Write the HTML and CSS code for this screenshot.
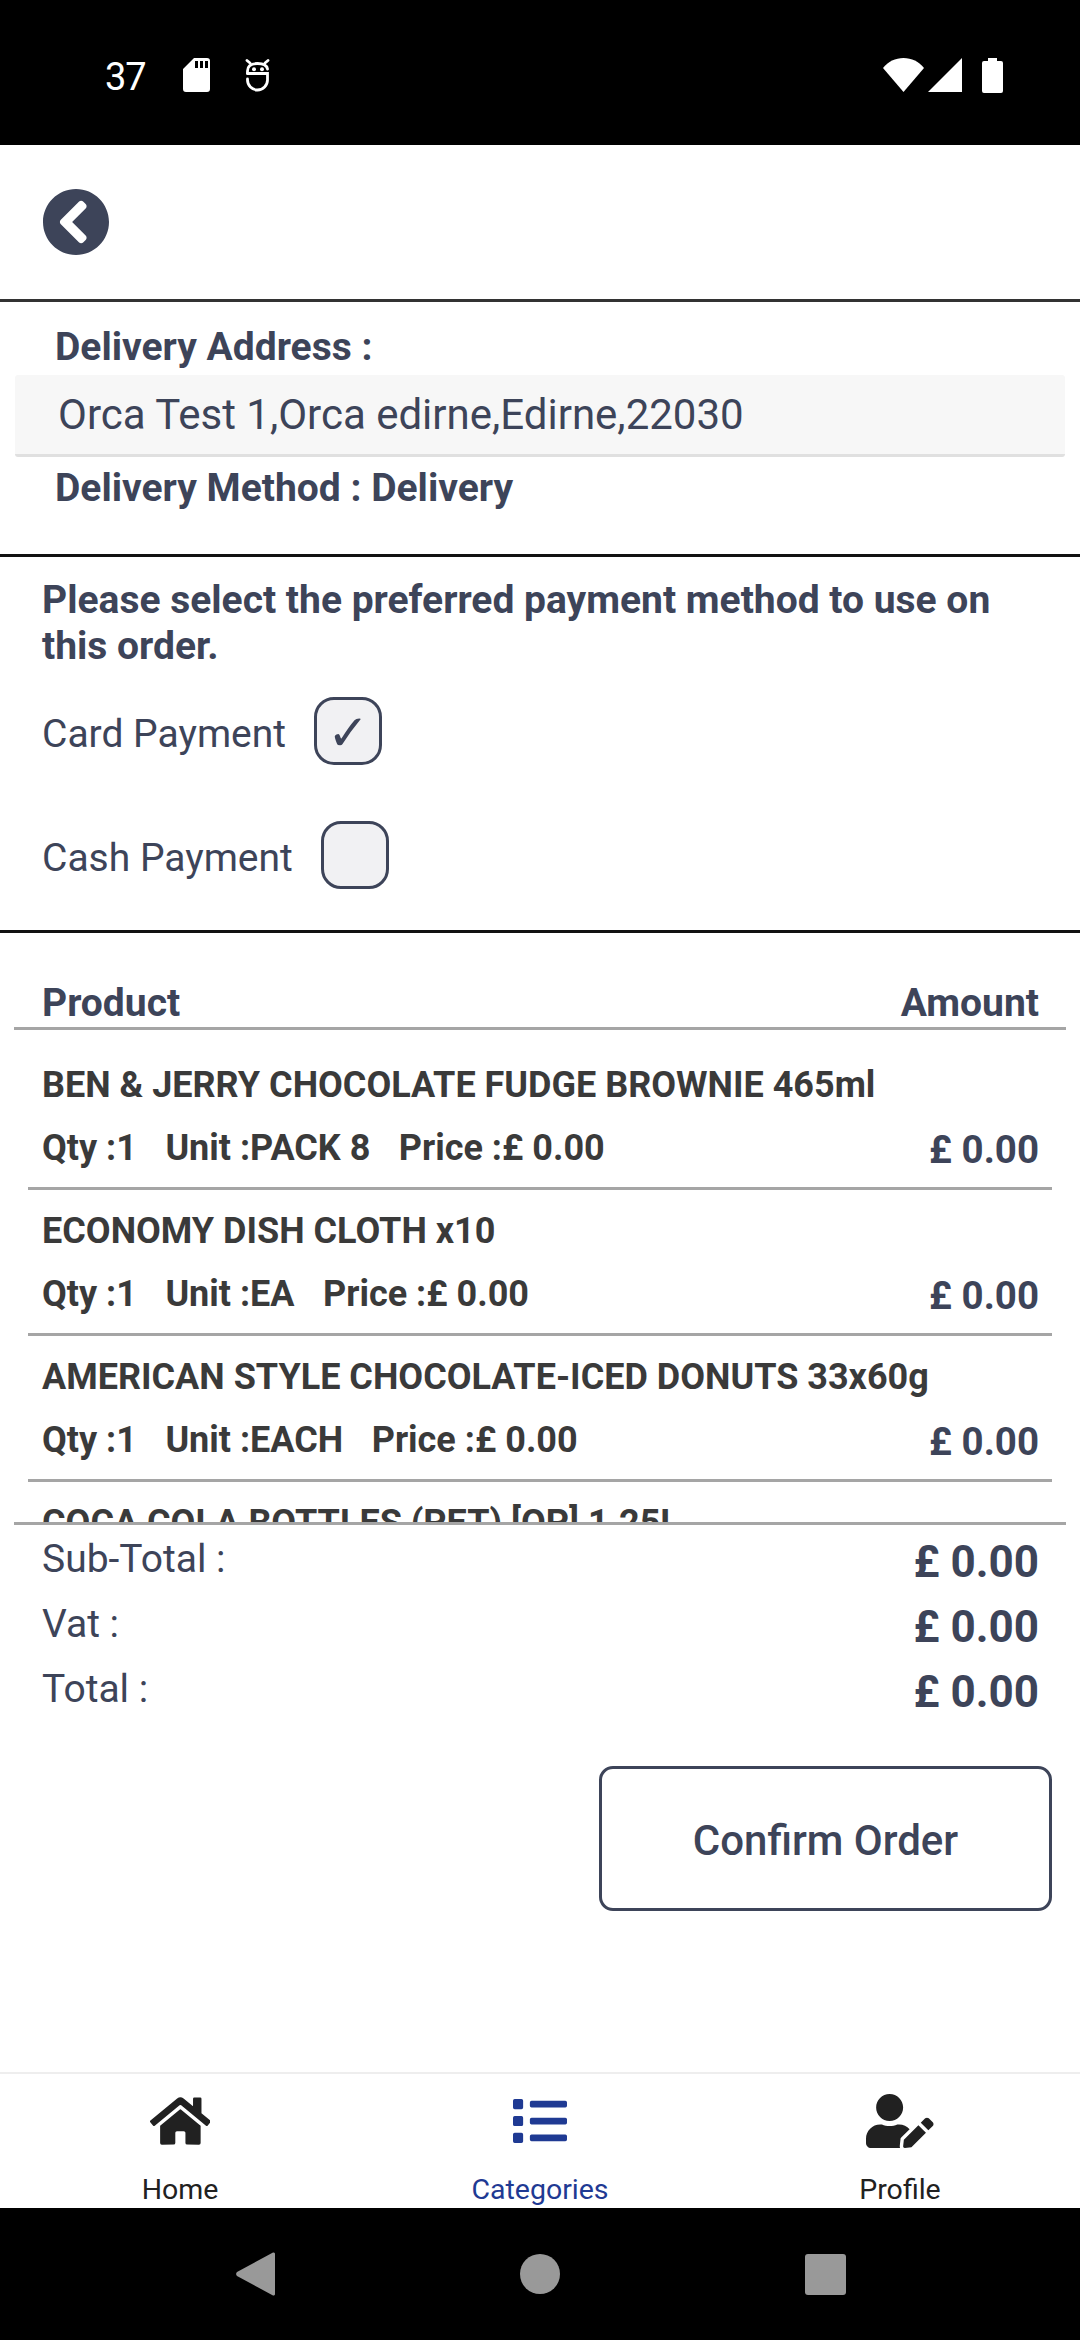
FILE: index.html
```html
<!DOCTYPE html>
<html lang="en">
<head>
<meta charset="utf-8">
<title>Confirm Order</title>
<link rel="stylesheet" href="styles.css">
</head>
<body>
<div class="app">
  <div class="status">
    <div class="status-left">
      <span class="clock">37</span>
      <svg class="ic-sd" viewBox="0 0 27 34"><path fill="#fff" fill-rule="evenodd" d="M11 0h13a3 3 0 0 1 3 3v28a3 3 0 0 1-3 3H3a3 3 0 0 1-3-3V11zM12 3v7h3V3zm5 0v7h3V3zm5 0v7h3V3z"/></svg>
      <svg class="ic-bot" viewBox="0 0 25 34"><g fill="none" stroke="#fff" stroke-width="2.800" stroke-linecap="round"><path d="M2 2.500l3 2.500M23 2.500l-3 2.500"/><path d="M2.500 15.500V13C2.500 8 6.500 5.500 12.500 5.500S22 8 22.500 11"/><path d="M2.500 15.500H22.500V22A10 10 0 0 1 2.500 22V21"/></g><circle cx="9" cy="11.300" r="2" fill="#fff"/><circle cx="17" cy="11.300" r="2" fill="#fff"/></svg>
    </div>
    <div class="status-right">
      <svg class="ic-wifi" viewBox="0 0 41 34"><path fill="#fff" d="M0 10C5 3.500 12.500 0 20.500 0S36 3.500 41 10L20.500 34z"/></svg>
      <svg class="ic-signal" viewBox="0 0 34 34"><path fill="#fff" d="M34 0v34H0z"/></svg>
      <svg class="ic-batt" viewBox="0 0 21 35"><path fill="#fff" d="M6 0h9v3h4a2 2 0 0 1 2 2v28a2 2 0 0 1-2 2H2a2 2 0 0 1-2-2V5a2 2 0 0 1 2-2h4z"/></svg>
    </div>
  </div>

  <header class="topbar">
    <svg class="back" viewBox="8 8 496 496"><path fill="#3d4459" d="M256 8c137 0 248 111 248 248S393 504 256 504 8 393 8 256 119 8 256 8zM142.100 273l135.500 135.500c9.400 9.400 24.600 9.400 33.900 0l17-17c9.400-9.400 9.400-24.600 0-33.900L226.900 256l101.600-101.600c9.400-9.400 9.400-24.600 0-33.900l-17-17c-9.400-9.400-24.600-9.400-33.900 0L142.100 239c-9.400 9.400-9.400 24.600 0 34z"/></svg>
  </header>

  <section class="delivery">
    <div class="d-label">Delivery Address :</div>
    <div class="d-box">Orca Test 1,Orca edirne,Edirne,22030</div>
    <div class="d-label">Delivery Method : Delivery</div>
  </section>

  <section class="payment">
    <h2 class="pay-title">Please select the preferred payment method to use on this order.</h2>
    <div class="pay-row">
      <span class="pay-label">Card Payment</span>
      <span class="check">✓</span>
    </div>
    <div class="pay-row pay-row-2">
      <span class="pay-label">Cash Payment</span>
      <span class="check"></span>
    </div>
  </section>

  <section class="order">
    <div class="order-head"><span>Product</span><span>Amount</span></div>
    <div class="items">
      <div class="item">
        <div class="item-name">BEN &amp; JERRY CHOCOLATE FUDGE BROWNIE 465ml</div>
        <div class="item-line">
          <div class="item-meta"><span>Qty :1</span><span>Unit :PACK 8</span><span>Price :£ 0.00</span></div>
          <span class="item-amt">£ 0.00</span>
        </div>
      </div>
      <div class="item">
        <div class="item-name">ECONOMY DISH CLOTH x10</div>
        <div class="item-line">
          <div class="item-meta"><span>Qty :1</span><span>Unit :EA</span><span>Price :£ 0.00</span></div>
          <span class="item-amt">£ 0.00</span>
        </div>
      </div>
      <div class="item">
        <div class="item-name">AMERICAN STYLE CHOCOLATE-ICED DONUTS 33x60g</div>
        <div class="item-line">
          <div class="item-meta"><span>Qty :1</span><span>Unit :EACH</span><span>Price :£ 0.00</span></div>
          <span class="item-amt">£ 0.00</span>
        </div>
      </div>
      <div class="item">
        <div class="item-name">COCA COLA BOTTLES (PET) [OP] 1.25L</div>
      </div>
    </div>
  </section>

  <section class="totals">
    <div class="total-row"><span class="t-label">Sub-Total :</span><span class="t-val">£ 0.00</span></div>
    <div class="total-row"><span class="t-label">Vat :</span><span class="t-val">£ 0.00</span></div>
    <div class="total-row"><span class="t-label">Total :</span><span class="t-val">£ 0.00</span></div>
  </section>

  <div class="actions"><button class="confirm" type="button">Confirm Order</button></div>

  <nav class="tabs">
    <div class="tab">
      <svg class="tab-ic" viewBox="0 0 576 512"><path fill="#212121" d="M280.370 148.260L96 300.110V464a16 16 0 0 0 16 16l112.060-.29a16 16 0 0 0 15.920-16V368a16 16 0 0 1 16-16h64a16 16 0 0 1 16 16v95.640a16 16 0 0 0 16 16.050L464 480a16 16 0 0 0 16-16V300L295.670 148.260a12.190 12.190 0 0 0-15.300 0zM571.600 251.470L488 182.560V44.050a12 12 0 0 0-12-12h-56a12 12 0 0 0-12 12v72.610L318.470 43a48 48 0 0 0-61 0L4.340 251.470a12 12 0 0 0-1.600 16.900l25.500 31A12 12 0 0 0 45.150 301l235.220-193.740a12.190 12.190 0 0 1 15.300 0L530.900 301a12 12 0 0 0 16.900-1.600l25.500-31a12 12 0 0 0-1.700-16.930z"/></svg>
      <span class="tab-label">Home</span>
    </div>
    <div class="tab tab-active">
      <svg class="tab-ic" viewBox="0 0 512 512"><path fill="#1f3a93" d="M80 368H16a16 16 0 0 0-16 16v64a16 16 0 0 0 16 16h64a16 16 0 0 0 16-16v-64a16 16 0 0 0-16-16zm0-320H16A16 16 0 0 0 0 64v64a16 16 0 0 0 16 16h64a16 16 0 0 0 16-16V64a16 16 0 0 0-16-16zm0 160H16a16 16 0 0 0-16 16v64a16 16 0 0 0 16 16h64a16 16 0 0 0 16-16v-64a16 16 0 0 0-16-16zm416 176H176a16 16 0 0 0-16 16v32a16 16 0 0 0 16 16h320a16 16 0 0 0 16-16v-32a16 16 0 0 0-16-16zm0-320H176a16 16 0 0 0-16 16v32a16 16 0 0 0 16 16h320a16 16 0 0 0 16-16V80a16 16 0 0 0-16-16zm0 160H176a16 16 0 0 0-16 16v32a16 16 0 0 0 16 16h320a16 16 0 0 0 16-16v-32a16 16 0 0 0-16-16z"/></svg>
      <span class="tab-label">Categories</span>
    </div>
    <div class="tab">
      <svg class="tab-ic" viewBox="0 0 640 512"><path fill="#212121" d="M224 256c70.700 0 128-57.300 128-128S294.700 0 224 0 96 57.300 96 128s57.300 128 128 128zm89.600 32h-16.700c-22.200 10.200-46.900 16-72.900 16s-50.600-5.800-72.900-16h-16.700C60.200 288 0 348.200 0 422.400V464c0 26.500 21.500 48 48 48h274.900c-2.400-6.800-3.400-14-2.600-21.300l6.800-60.900 1.200-11.100 7.900-7.900 77.300-77.300c-24.500-27.700-60-45.500-99.900-45.500zm45.300 145.300l-6.800 61c-1.100 10.200 7.500 18.800 17.600 17.600l60.900-6.800 137.900-137.900-71.700-71.700-137.900 137.800zM633 268.900L595.100 231c-9.300-9.300-24.500-9.300-33.800 0l-37.800 37.800-4.100 4.100 71.800 71.700 41.800-41.800c9.300-9.400 9.300-24.500 0-33.900z"/></svg>
      <span class="tab-label">Profile</span>
    </div>
  </nav>

  <div class="sysnav">
    <svg class="sys-back" viewBox="0 0 39 44"><path fill="#999" d="M37 .5a1.500 1.500 0 0 1 2 1.500v40a1.500 1.500 0 0 1-2 1.500L1 24a3 3 0 0 1 0-4z"/></svg>
    <span class="sys-home"></span>
    <span class="sys-recent"></span>
  </div>
</div>
</body>
</html>
```
FILE: styles.css
```css
* { box-sizing: border-box; }
html, body { margin: 0; padding: 0; background: #fff; }
body { font-family: Roboto, "Liberation Sans", sans-serif; color: #3d4459; }
.app { width: 1080px; height: 2340px; display: flex; flex-direction: column; overflow: hidden; }

.status { height: 145px; flex: none; background: #000; display: flex; justify-content: space-between; align-items: center; padding: 5px 77px 0 105px; color: #fff; }
.status-left, .status-right { display: flex; align-items: center; }
.clock { font-size: 38px; letter-spacing: -1px; font-weight: 400; width: 78px; line-height: 44px; padding-top: 4px; }
.ic-sd { width: 27px; height: 34px; margin-right: 35px; }
.ic-bot { width: 25px; height: 34px; }
.ic-wifi { width: 41px; height: 34px; margin-right: 4px; }
.ic-signal { width: 34px; height: 34px; margin-right: 20px; }
.ic-batt { width: 21px; height: 35px; }

.topbar { height: 157px; flex: none; border-bottom: 3px solid #333; padding: 44px 0 0 43px; }
.back { display: block; width: 66px; height: 66px; }

.delivery { height: 255px; flex: none; border-bottom: 3px solid #111; padding-top: 22px; }
.d-label { font-size: 39px; line-height: 46px; font-weight: 700; padding-left: 55px; }
.d-box { margin: 5px 15px 8px; height: 82px; background: #f7f7f7; border-bottom: 3px solid #e0e0e0; font-size: 42px; line-height: 80px; padding-left: 43px; border-radius: 3px; }

.payment { height: 376px; flex: none; border-bottom: 3px solid #111; padding: 20px 42px 0; }
.pay-title { margin: 0; font-size: 39px; line-height: 46px; font-weight: 700; }
.pay-row { display: flex; align-items: center; gap: 28px; margin-top: 28px; height: 68px; }
.pay-row-2 { margin-top: 56px; }
.pay-label { font-size: 39px; line-height: 44px; padding-top: 6px; }
.check { width: 68px; height: 68px; border: 3px solid #3d4459; border-radius: 20px; background: #f1f1f3; display: flex; align-items: center; justify-content: center; font-family: "DejaVu Sans", sans-serif; font-size: 50px; line-height: 1; padding-top: 4px; }

.order { height: 589px; flex: none; display: flex; flex-direction: column; }
.order-head { display: flex; justify-content: space-between; margin: 0 14px; padding: 47px 27px 1px 28px; border-bottom: 3px solid #a5a5a5; font-size: 39px; line-height: 46px; font-weight: 700; flex: none; }
.items { height: 492px; overflow: hidden; padding-top: 14px; flex: none; }
.item { margin: 0 28px; padding: 19px 13px 15px 14px; border-bottom: 3px solid #a5a5a5; color: #3a3a3a; }
.item:last-child { border-bottom: 0; }
.item-name { font-size: 36px; line-height: 44px; font-weight: 700; white-space: nowrap; }
.item-line { display: flex; justify-content: space-between; align-items: flex-start; margin-top: 19px; }
.item-meta { display: flex; gap: 28.500px; font-size: 36px; line-height: 44px; font-weight: 700; }
.item-amt { font-size: 38.500px; line-height: 44px; font-weight: 700; color: #3d4459; margin-top: 2px; }

.totals { flex: none; border-top: 3px solid #a5a5a5; margin: 0 14px; padding: 11px 27px 0 28px; }
.total-row { display: flex; justify-content: space-between; align-items: flex-start; height: 52px; margin-bottom: 13px; }
.t-label { font-size: 39px; line-height: 46px; }
.t-val { font-size: 44px; line-height: 52px; font-weight: 700; }

.actions { flex: 1; display: flex; justify-content: flex-end; align-items: flex-start; padding: 35px 28px 0 0; }
.confirm { width: 453px; height: 145px; border: 3px solid #3d4459; border-radius: 14px; background: #fff; color: #3d4459; font-family: inherit; font-size: 42px; font-weight: 500; padding: 3px 0 0; }

.tabs { height: 136px; flex: none; border-top: 2px solid #eee; display: grid; grid-template-columns: repeat(3, 1fr); padding-top: 20px; color: #212121; }
.tab { display: flex; flex-direction: column; align-items: center; }
.tab-ic { height: 54px; display: block; }
.tab-label { font-size: 28.500px; line-height: 34px; margin-top: 25px; }
.tab-active { color: #1f3a93; }

.sysnav { height: 132px; flex: none; background: #000; display: grid; grid-template-columns: repeat(3, 285px); justify-content: center; justify-items: center; align-items: center; }
.sys-back { width: 39px; height: 44px; }
.sys-home { width: 40px; height: 40px; border-radius: 50%; background: #999; }
.sys-recent { width: 41px; height: 41px; border-radius: 3px; background: #999; }
```
